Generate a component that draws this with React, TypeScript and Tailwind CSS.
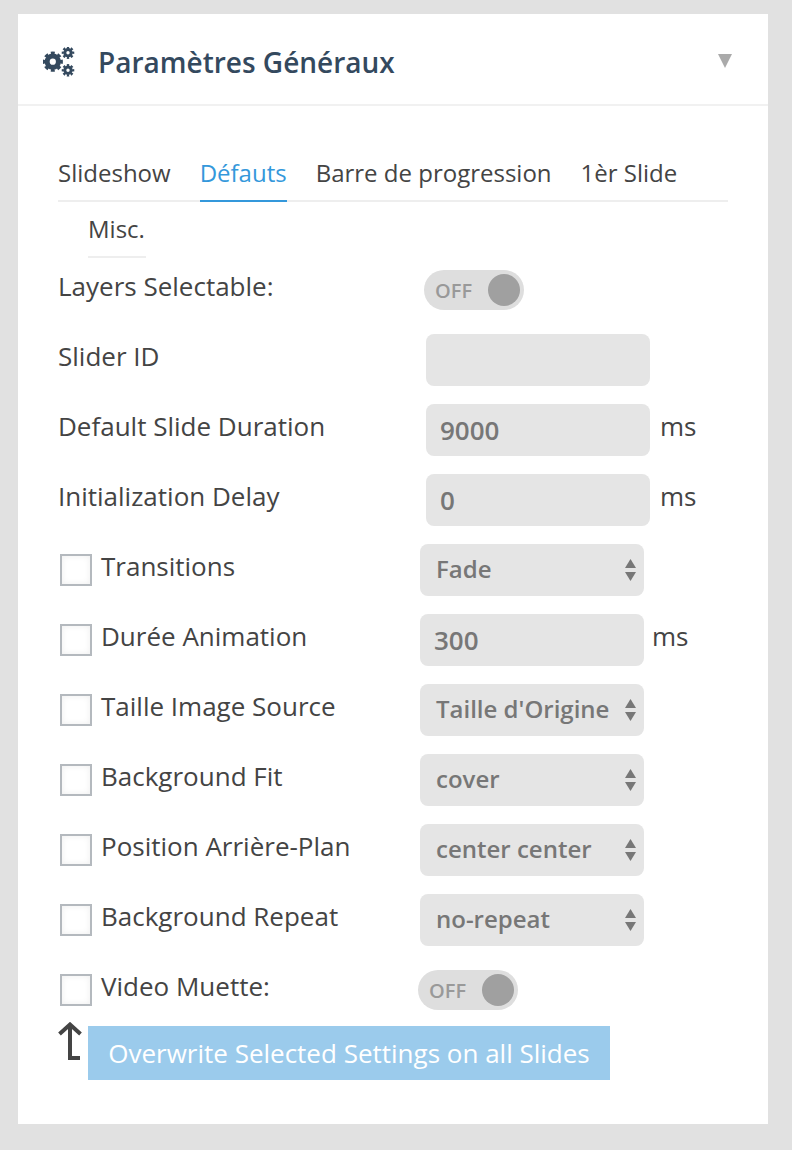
function Gears() {
  const gear = (cx: number, cy: number, ring: number, ringW: number, tooth: number, toothW: number) => (
    <g>
      <circle cx={cx} cy={cy} r={ring} strokeWidth={ringW} />
      <circle cx={cx} cy={cy} r={tooth} strokeWidth={toothW} pathLength={16} strokeDasharray="1.15 0.85" strokeDashoffset={0.575} />
    </g>
  );
  return (
    <svg width="32" height="30" viewBox="0 0 32 30" className="shrink-0 fill-none stroke-[#34495e]">
      {gear(9.8, 14.7, 5.6, 5, 8.6, 3)}
      {gear(25, 5.7, 3.2, 3, 5.2, 2.2)}
      {gear(25, 23.3, 3.2, 3, 5.2, 2.2)}
    </svg>
  );
}

function Toggle() {
  return (
    <div className="flex h-10 w-[100px] items-center justify-between rounded-full bg-[#dedede] pl-[11px] pr-1">
      <span className="translate-y-px text-xl font-semibold text-[#999999]">OFF</span>
      <span className="h-8 w-8 rounded-full bg-[#a0a0a0]" />
    </div>
  );
}

function Checkbox() {
  return <span className="h-8 w-8 shrink-0 border-2 border-[#b4b9be] bg-white shadow-[inset_0_0_6px_rgba(0,0,0,0.07)]" />;
}

function Arrows() {
  return (
    <svg width="11" height="22" viewBox="0 0 11 22" className="shrink-0 fill-[#777777]">
      <path d="M5.5 0 L11 9 L0 9 Z" />
      <path d="M5.5 22 L11 13 L0 13 Z" />
    </svg>
  );
}

function Select({ value }: { value: string }) {
  return (
    <div className="flex h-[52px] w-[224px] items-center justify-between rounded-lg bg-[#e5e5e5] pl-4 pr-2 text-2xl font-semibold text-[#777777]">
      <span className="-translate-y-px">{value}</span>
      <Arrows />
    </div>
  );
}

function NumberInput({ value }: { value?: string }) {
  return (
    <div className="flex h-[52px] w-[224px] items-center rounded-lg bg-[#e5e5e5] px-[14px] text-[26px] font-semibold text-[#777777]">
      {value}
    </div>
  );
}

function Row({ check, label, x, children }: { check?: boolean; label: string; x: string; children: React.ReactNode }) {
  return (
    <div className="flex h-[70px] items-start">
      <div className={x}>
        <div className="flex h-[46px] items-center">
          {check && <span className="mr-[9px] ml-0.5 flex translate-y-[3px]"><Checkbox /></span>}
          <span className="-translate-y-px leading-none">{label}</span>
        </div>
      </div>
      <div className="flex items-start">{children}</div>
    </div>
  );
}

export default function App() {
  return (
    <div className="min-h-[1150px] bg-[#e1e1e1] px-[18px] pt-[14px] font-['Open_Sans',sans-serif] text-[26px] text-[#444444]">
      <div className="h-[1110px] w-[750px] bg-white">
        <div className="flex h-[92px] items-center border-b-2 border-[#f1f1f1] pl-[25px] pr-[36px] pt-1.5">
          <Gears />
          <h1 className="ml-[23px] flex-1 text-[28px] font-semibold text-[#34495e]">Paramètres Généraux</h1>
          <svg width="14" height="14" viewBox="0 0 14 14" className="-mt-0.5 fill-[#aaaaaa]">
            <path d="M0 0 H14 L7 14 Z" />
          </svg>
        </div>
        <div className="px-10">
          <div className="mt-10 text-2xl">
            <div className="flex h-14 gap-[29px] border-b-2 border-[#eeeeee]">
              <span className="flex items-center">Slideshow</span>
              <span className="-mb-0.5 flex h-14 items-center border-b-2 border-[#3498db] text-[#3498db]">Défauts</span>
              <span className="flex items-center">Barre de progression</span>
              <span className="flex items-center">1èr Slide</span>
            </div>
            <div className="ml-[30px] flex h-14 w-[58px] items-center border-b-2 border-[#eeeeee] whitespace-nowrap">Misc.</div>
          </div>
          <div className="mt-1.5">
            <Row label="Layers Selectable:" x="w-[366px]">
              <div className="mt-1.5"><Toggle /></div>
            </Row>
            <Row label="Slider ID" x="w-[368px]"><NumberInput /></Row>
            <Row label="Default Slide Duration" x="w-[368px]">
              <NumberInput value="9000" />
              <span className="ml-2.5 flex h-[46px] -translate-y-px items-center leading-none">ms</span>
            </Row>
            <Row label="Initialization Delay" x="w-[368px]">
              <NumberInput value="0" />
              <span className="ml-2.5 flex h-[46px] -translate-y-px items-center leading-none">ms</span>
            </Row>
            <Row check label="Transitions" x="w-[362px]"><Select value="Fade" /></Row>
            <Row check label="Durée Animation" x="w-[362px]">
              <NumberInput value="300" />
              <span className="ml-2 flex h-[46px] -translate-y-px items-center leading-none">ms</span>
            </Row>
            <Row check label="Taille Image Source" x="w-[362px]"><Select value="Taille d'Origine" /></Row>
            <Row check label="Background Fit" x="w-[362px]"><Select value="cover" /></Row>
            <Row check label="Position Arrière-Plan" x="w-[362px]"><Select value="center center" /></Row>
            <Row check label="Background Repeat" x="w-[362px]"><Select value="no-repeat" /></Row>
            <div className="h-[62px]">
              <Row check label="Video Muette:" x="w-[360px]">
                <div className="mt-1.5"><Toggle /></div>
              </Row>
            </div>
          </div>
          <div className="flex items-start">
            <svg width="30" height="40" viewBox="0 0 30 40" className="-mt-1 shrink-0 fill-none stroke-[#444444] stroke-[4]">
              <path d="M1.5 12 L12 2.5 L22.5 12" />
              <path d="M12 3 V36 H22" />
            </svg>
            <div className="flex h-[54px] w-[522px] items-center justify-center bg-[#9bcbec] text-white">Overwrite Selected Settings on all Slides</div>
          </div>
        </div>
      </div>
    </div>
  );
}
